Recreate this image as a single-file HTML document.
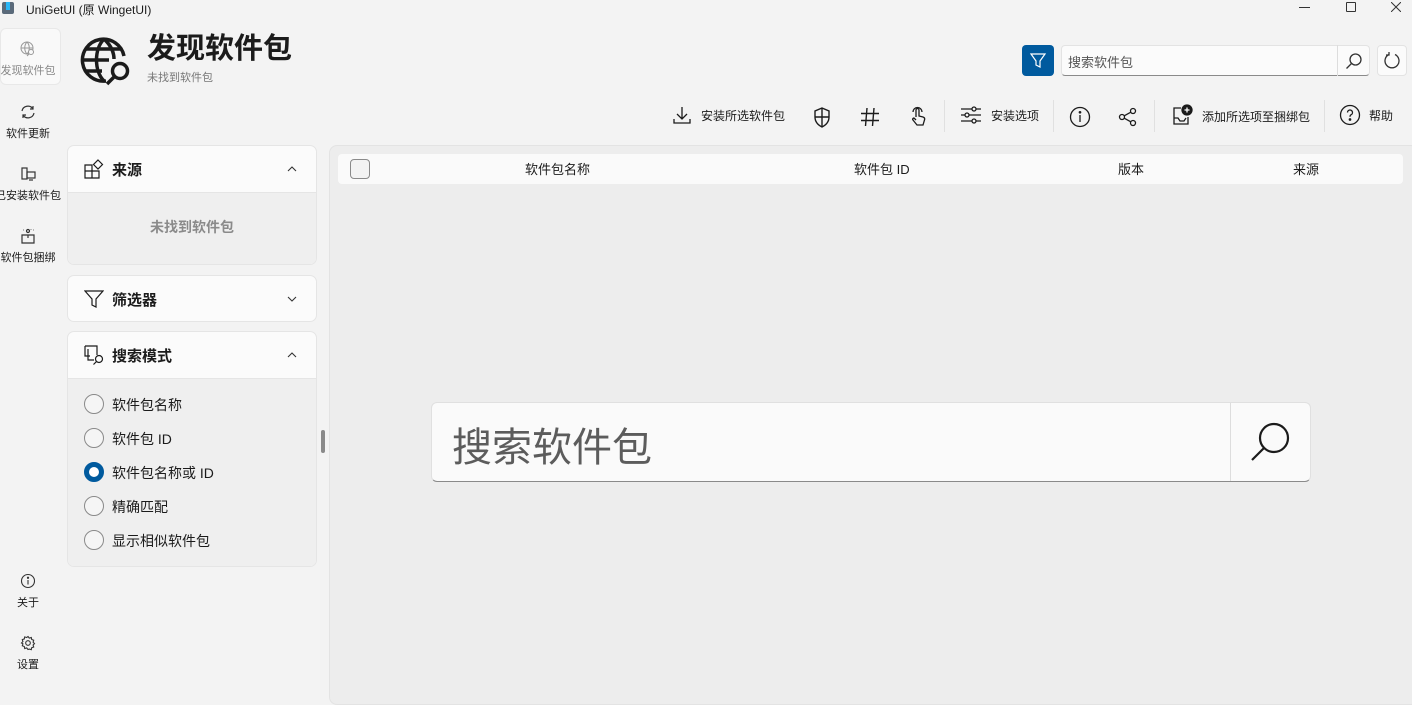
<!DOCTYPE html>
<html><head><meta charset="utf-8"><style>
*{box-sizing:border-box;margin:0;padding:0}
body{width:1412px;height:686px;overflow:hidden;background:#f3f3f3;font-family:"Liberation Sans","Noto Sans CJK SC",sans-serif;color:#1b1b1b;position:relative}
.a{position:absolute}
svg{display:block}
.nav{position:absolute;left:-22px;width:100px;text-align:center;font-size:11px;color:#1b1b1b;white-space:nowrap}
.card{position:absolute;left:67px;width:250px;background:#fbfbfb;border:1px solid #e5e5e5;border-radius:7px;overflow:hidden}
.ch{height:46px;position:relative;font-size:15px;font-weight:bold}
.cb{background:#efefef;border-top:1px solid #e5e5e5}
.tb{position:absolute;top:104px;font-size:12px;display:flex;align-items:center;gap:8px}
.radio{position:absolute;left:16px;width:20px;height:20px;border:1.5px solid #8a8a8a;border-radius:50%;background:#f5f5f5}
.rl{position:absolute;left:44px;font-size:14px}
.sep{position:absolute;top:100px;width:1px;height:32px;background:#e0e0e0}
.chev{position:absolute;left:219px;top:20px}
</style></head><body>
<!-- title bar -->
<div class="a" style="left:2px;top:2px;width:12px;height:12px;background:#5a6a7a;border-radius:2px"></div>
<div class="a" style="left:6px;top:2px;width:4px;height:8px;background:#29b6f6"></div>
<div class="a" style="left:26px;top:1px;font-size:12px">UniGetUI (原 WingetUI)</div>
<div class="a" style="left:1299px;top:7px;width:11px;height:1px;background:#333"></div>
<div class="a" style="left:1346px;top:2px;width:10px;height:10px;border:1px solid #333;border-radius:1px"></div>
<svg class="a" style="left:1391px;top:2px" width="10" height="10" viewBox="0 0 10 10" stroke="#333" stroke-width="1"><path d="M0 0l10 10M10 0L0 10"/></svg>

<!-- nav -->
<div class="a" style="left:0;top:28px;width:61px;height:57px;background:#f9f9f9;border:1px solid #e8e8e8;border-radius:6px"></div>
<div class="nav" style="top:40px;color:#888"><svg width="18" height="18" style="margin:0 auto 4px" viewBox="0 0 18 18" fill="none" stroke="#999" stroke-width="1"><circle cx="8" cy="8" r="6"/><path d="M2 8h12M8 2c-3 3-3 9 0 12M8 2c3 3 3 9 0 12"/><circle cx="12" cy="12" r="2.5" fill="#f9f9f9"/><path d="M10 14l-2 2"/></svg>发现软件包</div>
<div class="nav" style="top:103px"><svg width="18" height="18" style="margin:0 auto 4px" viewBox="0 0 18 18" fill="none" stroke="#333" stroke-width="1.2"><path d="M3 8a6 6 0 0 1 11-2M15 10a6 6 0 0 1-11 2M14 3v3h-3M4 15v-3h3"/></svg>软件更新</div>
<div class="nav" style="top:165px"><svg width="18" height="18" style="margin:0 auto 4px" viewBox="0 0 18 18" fill="none" stroke="#333" stroke-width="1.2"><rect x="3" y="3" width="5" height="11"/><rect x="8" y="7" width="8" height="6"/><path d="M10 15h4"/></svg>已安装软件包</div>
<div class="nav" style="top:227px"><svg width="18" height="18" style="margin:0 auto 4px" viewBox="0 0 18 18" fill="none" stroke="#333" stroke-width="1.2"><path d="M3 8h12v8H3zM9 8v3"/><circle cx="9" cy="4" r="1.5"/><path d="M4 3h.5M14 3h.5M12 2v.5"/></svg>软件包捆绑</div>
<div class="nav" style="top:573px"><svg width="16" height="16" style="margin:0 auto 5px" viewBox="0 0 16 16" fill="none" stroke="#333" stroke-width="1.1"><circle cx="8" cy="8" r="6.5"/><path d="M8 7v4.5"/><circle cx="8" cy="4.8" r=".6" fill="#333"/></svg>关于</div>
<div class="nav" style="top:635px"><svg width="16" height="16" style="margin:0 auto 5px" viewBox="0 0 16 16" fill="none" stroke="#333" stroke-width="1.1"><circle cx="8" cy="8" r="2.3"/><path d="M8 1.5l1.3 1.6 2-.6.4 2 2 .7-.6 2 1.4 1.4-1.4 1.4.6 2-2 .7-.4 2-2-.6L8 14.5l-1.3-1.6-2 .6-.4-2-2-.7.6-2L1.5 8l1.4-1.4-.6-2 2-.7.4-2 2 .6z"/></svg>设置</div>

<!-- header -->
<svg class="a" style="left:80px;top:34px" width="54" height="54" viewBox="0 0 54 54" fill="none" stroke="#1b1b1b" stroke-width="3.5"><path d="M44 22A21 21 0 1 0 26 47"/><path d="M3 26h26M24 5c-10 10-10 32 0 42M24 5c8 7 10 15 10 20M6 15h36M6 37h16"/><circle cx="40" cy="37" r="7.5"/><path d="M34.5 42.5L27 50"/></svg>
<div class="a" style="left:147px;top:25px;font-size:29px;font-weight:bold">发现软件包</div>
<div class="a" style="left:147px;top:69px;font-size:11px;color:#777">未找到软件包</div>

<!-- top right search -->
<div class="a" style="left:1022px;top:45px;width:32px;height:31px;background:#005a9e;border-radius:4px"><svg width="32" height="31" viewBox="0 0 32 31" fill="none" stroke="#fff" stroke-width="1.2"><path d="M9 9h14l-5 7v6l-4-2v-4z"/></svg></div>
<div class="a" style="left:1061px;top:45px;width:309px;height:31px;background:#fbfbfb;border:1px solid #e3e3e3;border-bottom:1px solid #8a8a8a;border-radius:4px"></div>
<div class="a" style="left:1068px;top:52px;font-size:13px;color:#555">搜索软件包</div>
<div class="a" style="left:1337px;top:45px;width:1px;height:31px;background:#ddd"></div>
<svg class="a" style="left:1343px;top:50px" width="22" height="22" viewBox="0 0 22 22" fill="none" stroke="#333" stroke-width="1.3"><circle cx="12.5" cy="9.5" r="5.5"/><path d="M8.5 13.5l-5 5"/></svg>
<div class="a" style="left:1377px;top:45px;width:30px;height:31px;background:#fbfbfb;border:1px solid #e3e3e3;border-radius:4px"><svg width="28" height="29" viewBox="0 0 28 29" fill="none" stroke="#333" stroke-width="1.3"><path d="M17 8.5a7 7 0 1 1-6 0"/><path d="M11 6v3H8"/></svg></div>

<!-- toolbar -->
<div class="tb" style="left:671px"><svg width="22" height="22" viewBox="0 0 22 22" fill="none" stroke="#1b1b1b" stroke-width="1.3"><path d="M11 3v12M6 10l5 5 5-5M3 15v4h16v-4"/></svg>安装所选软件包</div>
<svg class="a" style="left:812px;top:106px" width="20" height="22" viewBox="0 0 20 22" fill="none" stroke="#1b1b1b" stroke-width="1.4"><path d="M10 2l7 3v6c0 5-3 8-7 10-4-2-7-5-7-10V5z"/><path d="M10 2v19M3 11h14"/></svg>
<svg class="a" style="left:860px;top:107px" width="20" height="20" viewBox="0 0 20 20" fill="none" stroke="#1b1b1b" stroke-width="1.4"><path d="M7 1L5.5 19M14 1l-1.5 18M1 6.5h18M1 13.5h18"/></svg>
<svg class="a" style="left:908px;top:105px" width="20" height="22" viewBox="0 0 20 22" fill="none" stroke="#1b1b1b" stroke-width="1.3"><path d="M8 12V5a1.5 1.5 0 0 1 3 0v6l4 1c1.5.5 2 1.5 1.5 3L15 20H9l-4-5c-1-1 .5-2.5 1.5-1.5L8 15"/><path d="M5 7a4 4 0 0 1 9 0"/></svg>
<div class="sep" style="left:944px"></div>
<div class="tb" style="left:959px"><svg width="24" height="22" viewBox="0 0 24 22" fill="none" stroke="#1b1b1b" stroke-width="1.3"><path d="M2 5h20M2 11h20M2 17h20"/><circle cx="15" cy="5" r="2" fill="#f3f3f3"/><circle cx="8" cy="11" r="2" fill="#f3f3f3"/><circle cx="15" cy="17" r="2" fill="#f3f3f3"/></svg>安装选项</div>
<div class="sep" style="left:1053px"></div>
<svg class="a" style="left:1069px;top:106px" width="22" height="22" viewBox="0 0 22 22" fill="none" stroke="#1b1b1b" stroke-width="1.3"><circle cx="11" cy="11" r="9.5"/><path d="M11 9v7"/><circle cx="11" cy="6.3" r=".7" fill="#1b1b1b"/></svg>
<svg class="a" style="left:1117px;top:106px" width="22" height="22" viewBox="0 0 22 22" fill="none" stroke="#1b1b1b" stroke-width="1.3"><circle cx="16" cy="5" r="2.5"/><circle cx="16" cy="17" r="2.5"/><circle cx="5" cy="11" r="2.5"/><path d="M7.2 9.8l6.6-3.6M7.2 12.2l6.6 3.6"/></svg>
<div class="sep" style="left:1154px"></div>
<div class="tb" style="left:1170px"><svg width="24" height="24" viewBox="0 0 24 24" fill="none" stroke="#1b1b1b" stroke-width="1.3"><path d="M11 4H4v16h14v-7M4 14h4l2 3h4l2-3"/><circle cx="17" cy="6" r="5" fill="#1b1b1b"/><path d="M17 3.5v5M14.5 6h5" stroke="#fff"/></svg>添加所选项至捆绑包</div>
<div class="sep" style="left:1324px"></div>
<div class="tb" style="left:1339px"><svg width="22" height="22" viewBox="0 0 22 22" fill="none" stroke="#1b1b1b" stroke-width="1.3"><circle cx="11" cy="11" r="9.5"/><path d="M8.5 8.5a2.5 2.5 0 1 1 3.5 2.3c-.8.4-1 1-1 2"/><circle cx="11" cy="15.5" r=".7" fill="#1b1b1b"/></svg>帮助</div>

<!-- left cards -->
<div class="card" style="top:145px;height:120px">
 <div class="ch"><svg class="a" style="left:16px;top:13px" width="20" height="20" viewBox="0 0 20 20" fill="none" stroke="#1b1b1b" stroke-width="1.2"><path d="M1 6h7v6H1zM1 12h7v7H1zM8 12h7v7H8z"/><path d="M14 1l4.5 4.5-4.5 4.5-4.5-4.5z"/></svg><span class="a" style="left:44px;top:13px">来源</span><svg class="chev" width="10" height="6" viewBox="0 0 10 6" fill="none" stroke="#333" stroke-width="1.1"><path d="M1 5l4-4 4 4"/></svg></div>
 <div class="cb" style="height:74px;text-align:center;padding-top:24px;font-size:14px;font-weight:bold;color:#8a8a8a">未找到软件包</div>
</div>
<div class="card" style="top:275px;height:47px">
 <div class="ch"><svg class="a" style="left:16px;top:13px" width="20" height="20" viewBox="0 0 20 20" fill="none" stroke="#1b1b1b" stroke-width="1.2"><path d="M1 2h18l-7 8v8l-4-2v-6z"/></svg><span class="a" style="left:44px;top:13px">筛选器</span><svg class="chev" width="10" height="6" viewBox="0 0 10 6" fill="none" stroke="#333" stroke-width="1.1"><path d="M1 1l4 4 4-4"/></svg></div>
</div>
<div class="card" style="top:331px;height:236px">
 <div class="ch"><svg class="a" style="left:16px;top:13px" width="22" height="22" viewBox="0 0 22 22" fill="none" stroke="#1b1b1b" stroke-width="1.2"><path d="M1 1h12v9M1 1v10h5M4 4v11h6"/><circle cx="15" cy="14" r="3.5"/><path d="M12.5 16.5l-3 3"/></svg><span class="a" style="left:44px;top:13px">搜索模式</span><svg class="chev" width="10" height="6" viewBox="0 0 10 6" fill="none" stroke="#333" stroke-width="1.1"><path d="M1 5l4-4 4 4"/></svg></div>
 <div class="cb" style="height:190px;position:relative">
  <div class="radio" style="top:15px"></div><div class="rl" style="top:16px">软件包名称</div>
  <div class="radio" style="top:49px"></div><div class="rl" style="top:50px">软件包 ID</div>
  <div class="radio" style="top:83px;border:5px solid #005a9e;background:#fff"></div><div class="rl" style="top:84px">软件包名称或 ID</div>
  <div class="radio" style="top:117px"></div><div class="rl" style="top:118px">精确匹配</div>
  <div class="radio" style="top:151px"></div><div class="rl" style="top:152px">显示相似软件包</div>
 </div>
</div>
<div class="a" style="left:321px;top:430px;width:4px;height:23px;background:#8a8a8a;border-radius:2px"></div>

<!-- main panel -->
<div class="a" style="left:329px;top:145px;width:1090px;height:560px;background:#ededed;border:1px solid #e3e3e3;border-radius:8px"></div>
<div class="a" style="left:338px;top:154px;width:1065px;height:30px;background:#fafafa;border-radius:4px"></div>
<div class="a" style="left:350px;top:159px;width:20px;height:20px;border:1.3px solid #8a8a8a;border-radius:4px;background:#f3f3f3"></div>
<div class="a" style="left:525px;top:159px;font-size:13px">软件包名称</div>
<div class="a" style="left:854px;top:159px;font-size:13px">软件包 ID</div>
<div class="a" style="left:1118px;top:159px;font-size:13px">版本</div>
<div class="a" style="left:1293px;top:159px;font-size:13px">来源</div>

<!-- big search -->
<div class="a" style="left:431px;top:402px;width:880px;height:80px;background:#fafafa;border:1px solid #e0e0e0;border-bottom:1.5px solid #8a8a8a;border-radius:6px"></div>
<div class="a" style="left:1230px;top:403px;width:1px;height:78px;background:#ddd"></div>
<div class="a" style="left:452px;top:415px;font-size:40px;color:#5c5c5c">搜索软件包</div>
<svg class="a" style="left:1246px;top:418px" width="50" height="50" viewBox="0 0 50 50" fill="none" stroke="#1b1b1b" stroke-width="2.2"><circle cx="28" cy="20" r="14"/><path d="M18 30L6 42"/></svg>
</body></html>
